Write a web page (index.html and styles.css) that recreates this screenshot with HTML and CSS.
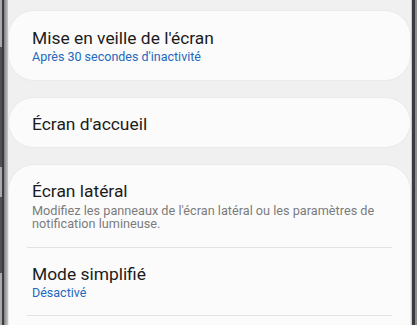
FILE: index.html
```html
<!DOCTYPE html>
<html lang="fr">
<head>
<meta charset="utf-8">
<link rel="stylesheet" href="styles.css">
</head>
<body>
<div class="device">
  <div class="bezel-left">
    <div class="edge">
      <div class="edge-seg plain s1"></div>
      <div class="edge-seg key s2"></div>
      <div class="edge-seg plain s3"></div>
      <div class="edge-seg key s4"></div>
      <div class="edge-seg plain s5"></div>
    </div>
    <div class="rim"></div>
  </div>
  <div class="screen">
    <div class="card card-sleep">
      <div class="title">Mise en veille de l'écran</div>
      <div class="sub">Après 30 secondes d'inactivité</div>
    </div>
    <div class="card card-home">
      <div class="title">Écran d'accueil</div>
    </div>
    <div class="card card-group">
      <div class="row row-edge">
        <div class="title">Écran latéral</div>
        <div class="desc">Modifiez les panneaux de l'écran latéral ou les paramètres de notification lumineuse.</div>
      </div>
      <div class="divider"></div>
      <div class="row row-easy">
        <div class="title">Mode simplifié</div>
        <div class="sub">Désactivé</div>
      </div>
      <div class="divider"></div>
    </div>
  </div>
  <div class="bezel-right"></div>
</div>
</body>
</html>
```
FILE: styles.css
```css
html, body {
  margin: 0;
  padding: 0;
  background: #ffffff;
}
body {
  font-family: Roboto, "Noto Sans", "Liberation Sans", sans-serif;
  width: 420px;
  height: 325px;
  overflow: hidden;
}
.device {
  display: flex;
  height: 325px;
}
.bezel-left {
  width: 8px;
  display: flex;
  flex: none;
}
.edge {
  width: 1.5px;
  display: flex;
  flex-direction: column;
}
.edge-seg.plain { background: #a9a9ab; }
.edge-seg.key { background: #505054; }
.s1 { height: 47px; }
.s2 { height: 120px; }
.s3 { height: 30px; }
.s4 { height: 76px; }
.s5 { flex: 1; }
.rim {
  flex: 1;
  background: linear-gradient(to right, #3c3c40 0, #3c3c40 1.5px, #7d7d80 2px, #a6a6a8 4px, #cfcfd0 6.5px);
}
.screen {
  width: 403px;
  flex: none;
  background: #f0f0f0;
  padding-top: 10px;
  display: flex;
  flex-direction: column;
  gap: 16px;
  box-sizing: border-box;
}
.bezel-right {
  flex: 1;
  background: linear-gradient(to right, #cacaca 0, #cacaca 1px, #3a3a40 1px, #3a3a40 4px, #8c8c90 4px, #8c8c90 6px, #ffffff 6px);
}
.card {
  background: #fbfbfb;
  border: 1px solid #eaeaea;
  border-radius: 26px;
  box-sizing: border-box;
  padding-left: 23px;
  padding-right: 19px;
  flex: none;
}
.card-sleep {
  height: 71px;
  padding-top: 16.5px;
}
.card-home {
  height: 51px;
  padding-top: 15.7px;
}
.card-group {
  padding-left: 0;
  padding-right: 0;
  padding-top: 16px;
  flex: 1;
  border-bottom-left-radius: 0;
  border-bottom-right-radius: 0;
  border-bottom: none;
}
.row {
  padding-left: 23px;
  padding-right: 19px;
}
.row-edge {
  padding-bottom: 16.7px;
}
.row-easy {
  padding-top: 16px;
  padding-bottom: 14.6px;
}
.divider {
  height: 1px;
  background: #e2e2e2;
  margin: 0 18px;
}
.title {
  font-size: 17.4px;
  line-height: 20px;
  color: #1c1c1c;
  white-space: nowrap;
}
.sub {
  font-size: 12.5px;
  line-height: 14px;
  margin-top: 2.2px;
  color: #2268bd;
  white-space: nowrap;
}
.desc {
  font-size: 12.7px;
  line-height: 13.3px;
  margin-top: 3px;
  color: #7b7b7b;
}
```
